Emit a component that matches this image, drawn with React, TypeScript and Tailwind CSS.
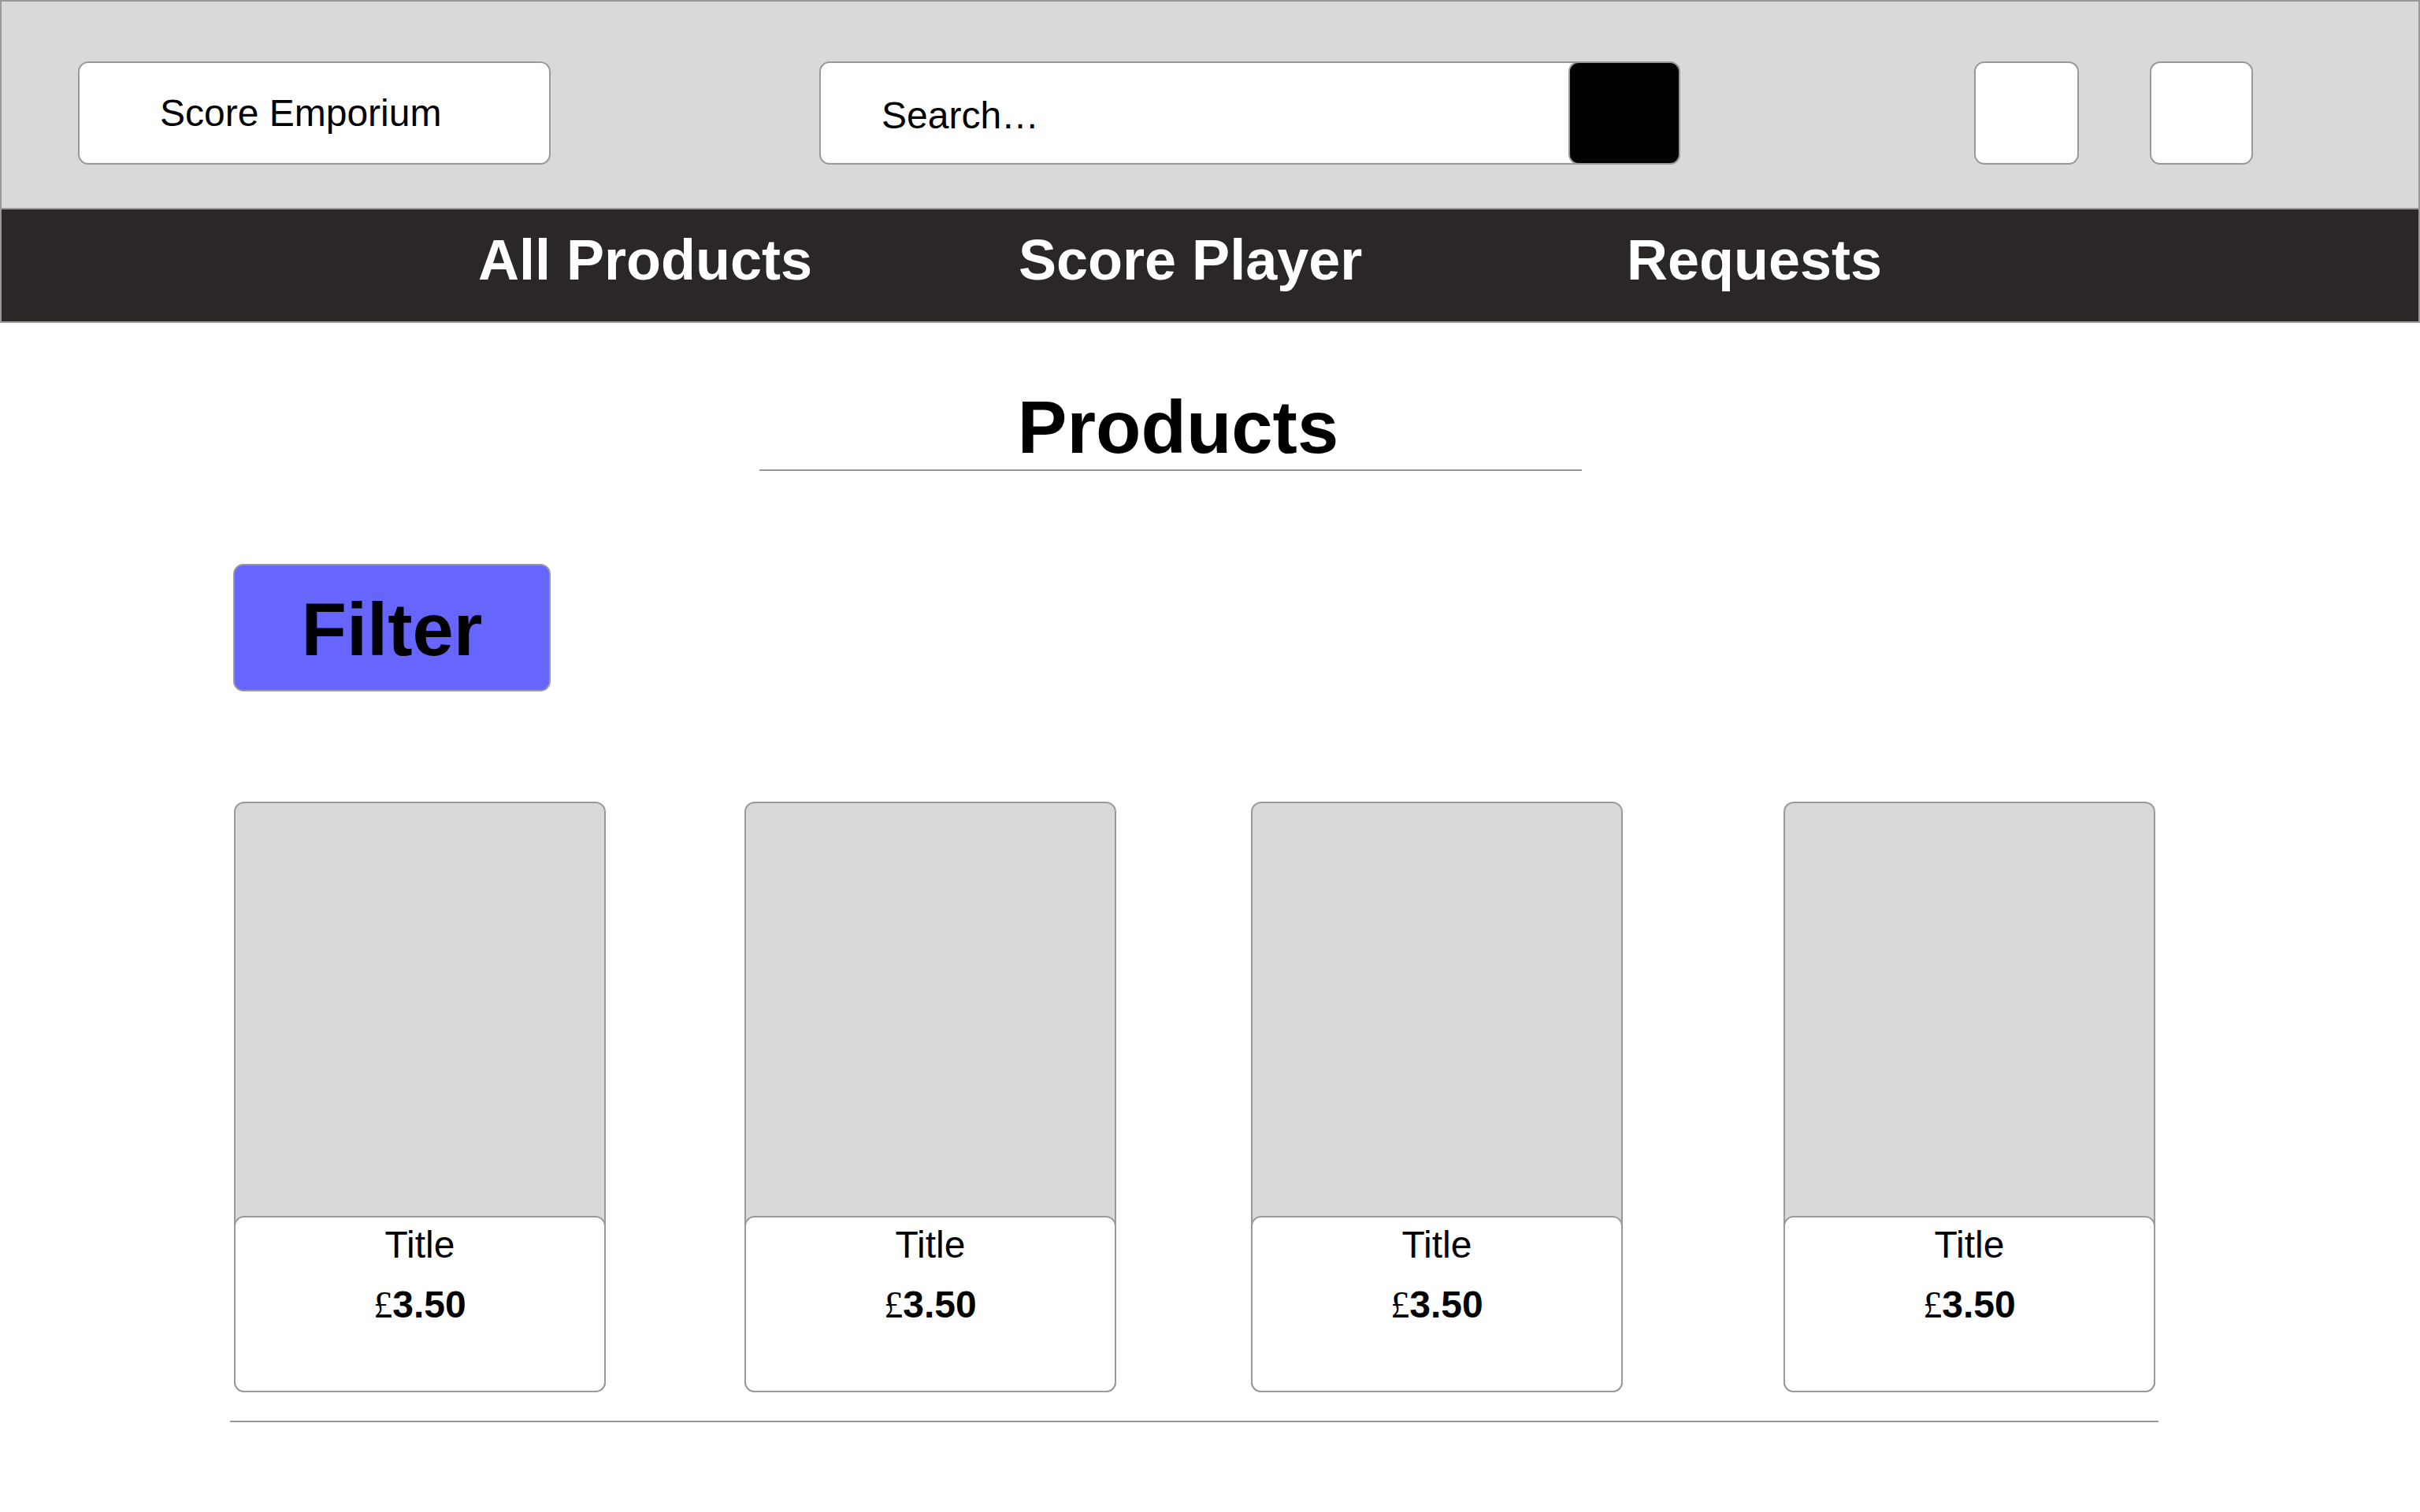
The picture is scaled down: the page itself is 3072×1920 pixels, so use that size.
import React from "react";

const cardOffsets = ["", "ml-[176px]", "ml-[171px]", "ml-[204px]"];

function Card({ offset }: { offset: string }) {
  return (
    <div
      className={`${offset} w-[472px] h-[750px] shrink-0 border-2 border-[#999999] rounded-[13px] bg-[#d9d9d9] flex flex-col justify-end`}
    >
      <div className="h-[224px] -mx-[2px] -mb-[2px] border-2 border-[#999999] rounded-[13px] bg-white flex flex-col items-center pt-[11px]">
        <div className="text-[48px] leading-none text-black">Title</div>
        <div className="mt-[28px] text-[48px] leading-none text-black font-bold">
          <span className="font-['Liberation_Serif',serif] font-normal">£</span>3.50
        </div>
      </div>
    </div>
  );
}

export default function App() {
  return (
    <div className="min-h-screen bg-white font-['Liberation_Sans',Arial,sans-serif] text-black">
      <header className="h-[266px] border-2 border-[#999999] bg-[#d9d9d9] flex items-start pt-[76px] pl-[97px]">
        <div className="w-[600px] h-[131px] shrink-0 border-2 border-[#999999] rounded-[13px] bg-white flex items-center pl-[102px] text-[48px] leading-none">
          Score Emporium
        </div>
        <div className="ml-[341px] w-[1093px] h-[131px] shrink-0 border-2 border-[#999999] rounded-[13px] bg-white flex items-center">
          <span className="pl-[77px] pt-[6px] text-[48px] leading-none">Search…</span>
          <div className="ml-auto -mr-[2px] w-[142px] h-[131px] shrink-0 border-2 border-[#999999] rounded-[13px] bg-black" />
        </div>
        <div className="ml-[373px] w-[133px] h-[131px] shrink-0 border-2 border-[#999999] rounded-[13px] bg-white" />
        <div className="ml-[90px] w-[131px] h-[131px] shrink-0 border-2 border-[#999999] rounded-[13px] bg-white" />
      </header>

      <nav className="h-[144px] border-2 border-t-0 border-[#999999] bg-[#2b2727] flex items-start pt-[28px] pl-[605px] text-white font-bold text-[72px] leading-none">
        <div className="w-[686px] shrink-0">All Products</div>
        <div className="w-[772px] shrink-0">Score Player</div>
        <div className="shrink-0">Requests</div>
      </nav>

      <main className="flex flex-col items-start">
        <h1 className="mt-[86px] ml-[964px] w-[1044px] border-b-2 border-[#999999] pb-[6px] pl-[19px] text-center text-[94px] font-bold leading-none">
          Products
        </h1>

        <button className="mt-[118px] ml-[296px] w-[403px] h-[162px] rounded-[13px] border-2 border-[#999999] bg-[#6666ff] flex items-center justify-center pt-[6px] text-[94px] font-bold leading-none text-black">
          Filter
        </button>

        <div className="mt-[140px] pl-[297px] flex">
          {cardOffsets.map((o, i) => (
            <Card key={i} offset={o} />
          ))}
        </div>

        <div className="mt-[36px] ml-[292px] w-[2448px] h-[2px] bg-[#999999]" />
      </main>
    </div>
  );
}
